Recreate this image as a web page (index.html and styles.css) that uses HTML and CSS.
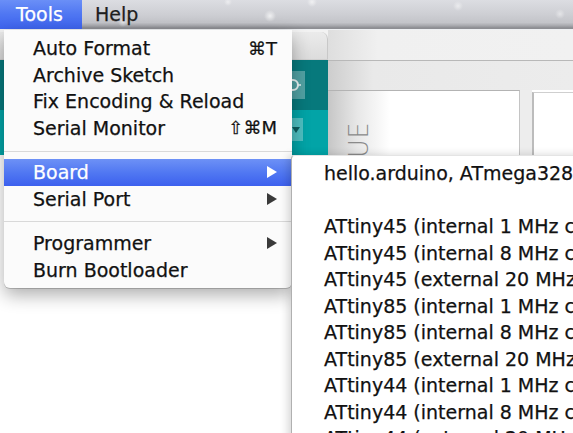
FILE: index.html
```html
<!DOCTYPE html>
<html>
<head>
<meta charset="utf-8">
<link rel="stylesheet" href="styles.css">
</head>
<body>
<div class="screen">
  <div class="menubar">
    <div class="mb-item active">Tools</div>
    <div class="mb-item">Help</div>
  </div>
  <div class="window">
    <div class="leftpane">
      <div class="tabrow"><div class="tab"></div></div>
      <div class="teal-dark">
        <div class="tbtn big">
          <svg width="14" height="16" viewBox="0 0 14 16"><path d="M1 3 h4 a5 5 0 0 1 0 10 h-4" fill="none" stroke="#e8f4f4" stroke-width="2"/><path d="M10 8 h3" stroke="#e8f4f4" stroke-width="1.5"/></svg>
        </div>
      </div>
      <div class="teal-light">
        <div class="tbtn small">
          <svg width="8" height="6" viewBox="0 0 8 6"><polygon points="0,0 8,0 4,6" fill="#0d5e60"/></svg>
        </div>
      </div>
      <div class="leftfill"></div>
    </div>
    <div class="rightpane">
      <div class="rtabbar"></div>
      <div class="rtoolbar"></div>
      <div class="rcontent">
        <div class="editor"><div class="vlabel">VALUE</div></div>
        <div class="gap"></div>
        <div class="panel"></div>
      </div>
    </div>
  </div>

  <div class="menu">
    <div class="item"><span class="label">Auto Format</span><span class="key">⌘T</span></div>
    <div class="item"><span class="label">Archive Sketch</span></div>
    <div class="item"><span class="label">Fix Encoding &amp; Reload</span></div>
    <div class="item"><span class="label">Serial Monitor</span><span class="key">⇧⌘M</span></div>
    <div class="sep"></div>
    <div class="item selected"><span class="label">Board</span><svg class="arrow" width="10" height="12" viewBox="0 0 10 12"><polygon points="0,0 10,6 0,12" fill="#ffffff"/></svg></div>
    <div class="item"><span class="label">Serial Port</span><svg class="arrow" width="10" height="12" viewBox="0 0 10 12"><polygon points="0,0 10,6 0,12" fill="#3a3a3a"/></svg></div>
    <div class="sep sep2"></div>
    <div class="item"><span class="label">Programmer</span><svg class="arrow" width="10" height="12" viewBox="0 0 10 12"><polygon points="0,0 10,6 0,12" fill="#3a3a3a"/></svg></div>
    <div class="item"><span class="label">Burn Bootloader</span></div>
  </div>

  <div class="submenu">
    <div class="sitem">hello.arduino, ATmega328 (8 MHz)</div>
    <div class="sitem blank"></div>
    <div class="sitem">ATtiny45 (internal 1 MHz clock)</div>
    <div class="sitem">ATtiny45 (internal 8 MHz clock)</div>
    <div class="sitem">ATtiny45 (external 20 MHz clock)</div>
    <div class="sitem">ATtiny85 (internal 1 MHz clock)</div>
    <div class="sitem">ATtiny85 (internal 8 MHz clock)</div>
    <div class="sitem">ATtiny85 (external 20 MHz clock)</div>
    <div class="sitem">ATtiny44 (internal 1 MHz clock)</div>
    <div class="sitem">ATtiny44 (internal 8 MHz clock)</div>
    <div class="sitem">ATtiny44 (external 20 MHz clock)</div>
  </div>
</div>
</body>
</html>
```
FILE: styles.css
```css
* { box-sizing: border-box; }
html, body { margin: 0; padding: 0; }
body { width: 573px; height: 433px; overflow: hidden; background: #ffffff; font-family: "DejaVu Sans", "Liberation Sans", sans-serif; }
.screen { position: relative; width: 573px; height: 433px; overflow: hidden; }

.menubar {
  height: 30px;
  display: flex;
  align-items: stretch;
  border-bottom: 1px solid #eef0f3;
  background:
    radial-gradient(circle at 270px 16px, rgba(255,255,255,0.7) 0, rgba(255,255,255,0) 6px),
    radial-gradient(circle at 123px 22px, rgba(255,255,255,0.55) 0, rgba(255,255,255,0) 5px),
    radial-gradient(circle at 312px 2px, rgba(255,255,255,0.6) 0, rgba(255,255,255,0) 5px),
    radial-gradient(circle at 228px 2px, rgba(255,255,255,0.5) 0, rgba(255,255,255,0) 4px),
    radial-gradient(circle at 458px 6px, rgba(255,255,255,0.5) 0, rgba(255,255,255,0) 5px),
    radial-gradient(circle at 560px 14px, rgba(255,255,255,0.45) 0, rgba(255,255,255,0) 5px),
    linear-gradient(to bottom, #dcdde2 0%, #cfd0d5 45%, #c3c4c9 78%, #a9aaaf 88%, #8d8e93 96%);
}
.mb-item {
  font-size: 19px;
  line-height: 29px;
  color: #1e1e1e;
  padding: 0 13px;
  -webkit-text-stroke: 0.25px currentColor;
}
.mb-item.active {
  width: 82px;
  padding: 0 0 0 16px;
  color: #ffffff;
  background: linear-gradient(to bottom, #6a8ff7 0%, #4f76f2 50%, #3d63ee 100%);
}

.window { display: flex; height: 403px; }
.leftpane { width: 328px; display: flex; flex-direction: column; }
.tabrow { height: 30px; background: #f2f2f2; display: flex; justify-content: flex-end; padding-top: 2px; border-bottom: 1px solid #cfcfcf; }
.tab { width: 328px; background: linear-gradient(to bottom, #ebebeb, #dcdcdc); border-radius: 0 7px 0 0; border-right: 1px solid #c8c8c8; }
.teal-dark { height: 50px; background: #07797c; display: flex; justify-content: flex-end; align-items: flex-start; padding: 11px 23px 0 0; }
.teal-light { height: 45px; background: #02a4a7; display: flex; justify-content: flex-end; align-items: flex-start; padding: 8px 25px 0 0; }
.tbtn { background: rgba(255,255,255,0.3); display: flex; align-items: center; justify-content: flex-end; }
.tbtn.big { width: 34px; height: 28px; padding-right: 3px; }
.tbtn.small { width: 30px; height: 23px; padding-right: 3px; }
.leftfill { flex: 1; background: #ffffff; }

.rightpane { flex: 1; display: flex; flex-direction: column; }
.rtabbar { height: 31px; background: linear-gradient(to right, #dedede 0, #f0f0f0 50px, #f1f1f1 100%); border-bottom: 1px solid #b8b8b8; }
.rtoolbar { height: 29px; background: linear-gradient(to right, #cdcdcd 0, #e9e9e9 45px, #ececec 100%); }
.rcontent { flex: 1; display: flex; }
.editor {
  width: 192px;
  border-top: 1px solid #b3b3b3;
  border-right: 1px solid #c4c4c4;
  background: linear-gradient(to right, #c6c6c6 0, #e8e8e8 30px, #ffffff 62px);
  padding: 34px 0 0 20px;
}
.vlabel {
  writing-mode: vertical-rl;
  transform: rotate(180deg);
  font-size: 26px;
  font-weight: 200;
  color: #8a8a8a;
  line-height: 22px;
  height: 80px;
  text-align: left;
}
.gap { width: 12px; background: #ededed; }
.panel { flex: 1; margin-top: 2px; border-top: 1px solid #cfcfcf; border-left: 2px solid #bcbcbc; background: #ffffff; }

.menu {
  position: absolute;
  left: 4px;
  top: 30px;
  width: 288px;
  padding: 5px 0;
  background: #fbfbfb;
  border-radius: 0 0 6px 6px;
  box-shadow: 0 1px 0 rgba(0,0,0,0.18), 0 7px 18px rgba(0,0,0,0.32);
  z-index: 2;
}
.item {
  height: 26.5px;
  display: flex;
  align-items: center;
  padding: 0 15px 0 29px;
  font-size: 19px;
  color: #111111;
  white-space: nowrap;
  -webkit-text-stroke: 0.25px currentColor;
}
.item .label { flex: 1; }
.item .key { font-size: 18px; }
.item.selected { color: #ffffff; background: linear-gradient(to bottom, #6d91f6 0%, #5178f2 50%, #3c60ee 100%); }
.sep { height: 18px; padding-top: 10px; }
.sep::after { content: ""; display: block; height: 1px; background: #d9d9d9; }
.sep2 { padding-top: 9px; }

.submenu {
  position: absolute;
  left: 291px;
  top: 155px;
  width: 300px;
  height: 290px;
  padding: 4px 0 0 32px;
  background: #ffffff;
  border-left: 1px solid #b0b0b0;
  border-top: 1px solid #e4e4e4;
  border-radius: 4px 0 0 0;
  box-shadow: -3px 0 9px rgba(0,0,0,0.16);
  z-index: 3;
}
.sitem {
  height: 26.5px;
  display: flex;
  align-items: center;
  font-size: 19px;
  color: #111111;
  white-space: nowrap;
  -webkit-text-stroke: 0.25px currentColor;
}
```
